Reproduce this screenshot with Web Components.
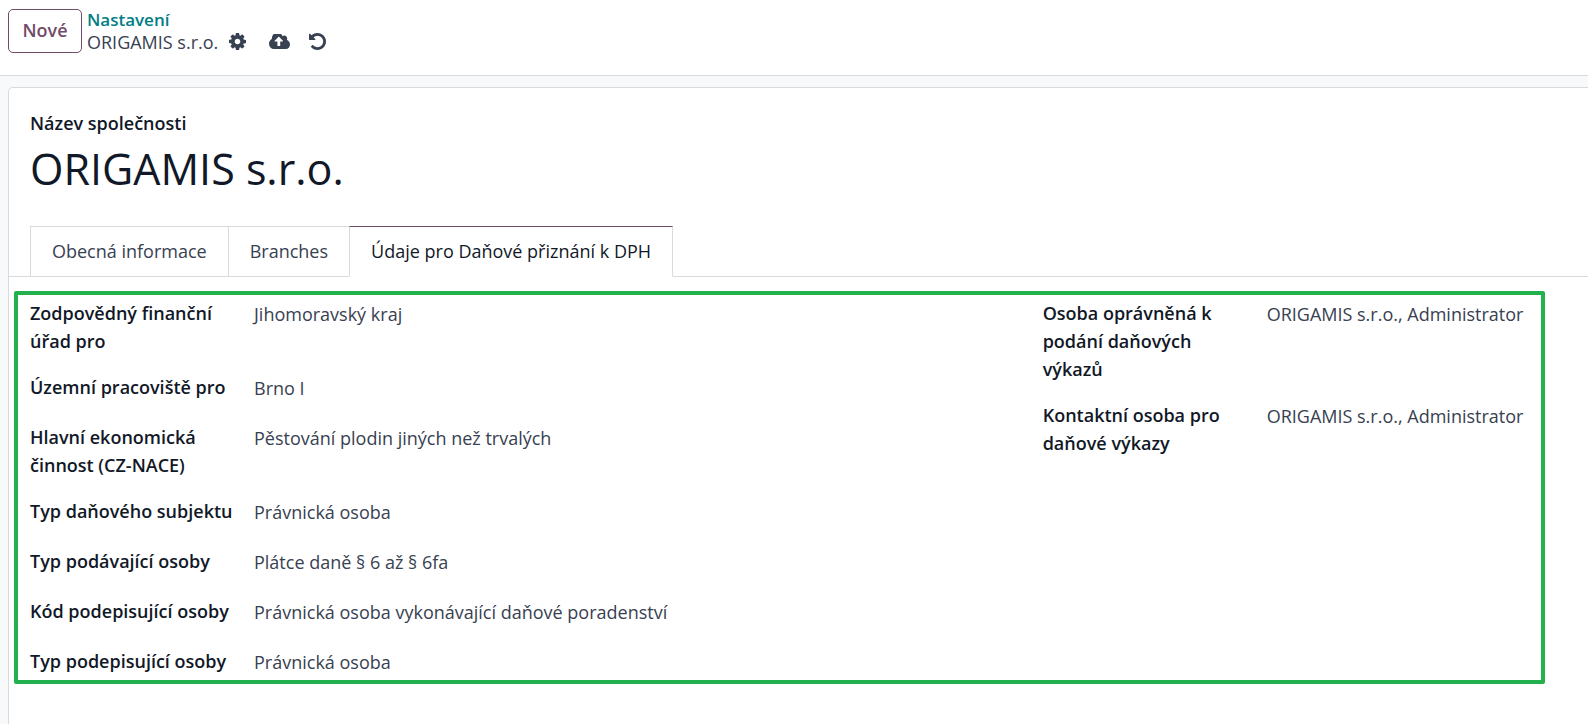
<!DOCTYPE html>
<html lang="cs">
<head>
<meta charset="utf-8">
<title>ORIGAMIS s.r.o.</title>
<style>
  body { margin: 0; background: #f8f9fb; color: #374151; font: 400 18px/28px "Open Sans", "Noto Sans", sans-serif; }
</style>
</head>
<body>
<company-app></company-app>

<template id="t-app">
  <style>
    :host { display: flex; flex-direction: column; min-height: 100vh; }
    company-sheet { flex: 1; margin: 11px 0 0 8px; }
    form-columns { margin: 14px 43px 40px 5px; }
  </style>
  <control-bar></control-bar>
  <company-sheet>
    <span slot="label">Název společnosti</span>
    <span slot="name">ORIGAMIS s.r.o.</span>
    <tab-strip>
      <tab-item>Obecná informace</tab-item>
      <tab-item>Branches</tab-item>
      <tab-item active>Údaje pro Daňové přiznání k DPH</tab-item>
    </tab-strip>
    <form-columns>
      <form-group>
        <form-field label="Zodpovědný finanční úřad pro">Jihomoravský kraj</form-field>
        <form-field label="Územní pracoviště pro">Brno I</form-field>
        <form-field label="Hlavní ekonomická činnost (CZ-NACE)">Pěstování plodin jiných než trvalých</form-field>
        <form-field label="Typ daňového subjektu">Právnická osoba</form-field>
        <form-field label="Typ podávající osoby">Plátce daně § 6 až § 6fa</form-field>
        <form-field label="Kód podepisující osoby">Právnická osoba vykonávající daňové poradenství</form-field>
        <form-field label="Typ podepisující osoby">Právnická osoba</form-field>
      </form-group>
      <form-group>
        <form-field label="Osoba oprávněná k podání daňových výkazů">ORIGAMIS s.r.o., Administrator</form-field>
        <form-field label="Kontaktní osoba pro daňové výkazy">ORIGAMIS s.r.o., Administrator</form-field>
      </form-group>
    </form-columns>
  </company-sheet>
</template>

<template id="t-bar">
  <style>
    :host { display: flex; align-items: flex-start; gap: 5px; padding: 8px 8px 21px; background: #fff; border-bottom: 1px solid #d8dadd; }
    button { font: inherit; color: inherit; background: none; border: 0; padding: 0; cursor: pointer; }
    .new { min-width: 74px; height: 44px; margin-top: 1px; padding: 0 13px 2px; border: 1px solid #714b67; border-radius: 5px; color: #714b67; font-weight: 600; }
    nav { line-height: 23px; }
    a { display: block; width: max-content; color: #017e84; font-size: 17px; font-weight: 600; text-decoration: none; }
    .current { display: flex; align-items: center; }
    .icon { display: flex; margin: 0 0 2px 19px; }
    .gear { margin-left: 11px; margin-right: 4px; }
    svg { display: block; fill: #374151; }
  </style>
  <button class="new" type="button">Nové</button>
  <nav aria-label="Navigace">
    <a href="#settings">Nastavení</a>
    <div class="current">
      <span>ORIGAMIS s.r.o.</span>
      <button class="icon gear" type="button" aria-label="Akce"><svg width="17" height="17" viewBox="128 128 1536 1536"><path d="M1152 896q0-106-75-181t-181-75-181 75-75 181 75 181 181 75 181-75 75-181zm512-109v222q0 12-8 23t-20 13l-185 28q-19 54-39 91 35 50 107 138 10 12 10 25t-9 23q-27 37-99 108t-94 71q-12 0-26-9l-138-108q-44 23-91 38-16 136-29 186-7 28-36 28h-222q-14 0-24.5-8.5t-11.5-21.5l-28-184q-49-16-90-37l-141 107q-10 9-25 9-14 0-25-11-126-114-165-168-7-10-7-23 0-12 8-23 15-21 51-66.5t54-70.5q-27-50-41-99l-183-27q-13-2-21-12.5t-8-23.5v-222q0-12 8-23t19-13l186-28q14-46 39-92-40-57-107-138-10-12-10-24 0-10 9-23 26-36 98.5-107.5t94.5-71.5q13 0 26 10l138 107q44-23 91-38 16-136 29-186 7-28 36-28h222q14 0 24.5 8.5t11.5 21.5l28 184q49 16 90 37l142-107q9-9 24-9 13 0 25 10 129 119 165 170 7 8 7 22 0 12-8 23-15 21-51 66.5t-54 70.5q26 50 41 98l183 28q13 2 21 12.5t8 23.5z"/></svg></button>
      <button class="icon" type="button" aria-label="Uložit"><svg width="21" height="15" viewBox="0 256 1920 1280" preserveAspectRatio="none"><path d="M1280 864q0-14-9-23l-352-352q-9-9-23-9t-23 9l-351 351q-10 12-10 24 0 14 9 23t23 9h224v352q0 13 9.500 22.500t22.500 9.500h192q13 0 22.500-9.500t9.500-22.500v-352h224q13 0 22.500-9.500t9.500-22.500zm640 288q0 159-112.500 271.500t-271.500 112.500h-1088q-185 0-316.500-131.500t-131.500-316.500q0-130 70-240t188-165q-2-30-2-43 0-212 150-362t362-150q156 0 285.500 87t188.500 231q71-62 166-62 106 0 181 75t75 181q0 76-41 138 130 31 213.500 135.500t83.500 238.500z"/></svg></button>
      <button class="icon" type="button" aria-label="Zahodit"><svg width="17" height="17" viewBox="128 128 1536 1536"><path d="M1664 896q0 156-61 298t-164 245-245 164-298 61q-172 0-327-72.500t-264-204.500q-7-10-6.500-22.500t8.500-20.500l137-138q10-9 25-9 16 2 23 12 73 95 179 147t225 52q104 0 198.500-40.500t163.500-109.500 109.500-163.500 40.500-198.500-40.500-198.500-109.500-163.500-163.500-109.500-198.500-40.500q-98 0-188 35.500t-160 101.500l137 138q31 30 14 69-17 40-59 40h-448q-26 0-45-19t-19-45v-448q0-42 40-59 39-17 69 14l130 129q107-101 244.500-156.500t284.500-55.500q156 0 298 61t245 164 164 245 61 298z"/></svg></button>
    </div>
  </nav>
</template>

<template id="t-sheet">
  <style>
    :host { display: block; background: #fff; border: 1px solid #d8dadd; border-width: 1px 0 0 1px; border-radius: 5px 0 0 0; }
    header { padding: 21px 21px 25px; color: #111827; }
    .label { font-weight: 600; }
    h1 { margin: 0; font-size: 43px; font-weight: 400; line-height: 64px; }
  </style>
  <header>
    <div class="label"><slot name="label"></slot></div>
    <h1><slot name="name"></slot></h1>
  </header>
  <slot></slot>
</template>

<template id="t-tabs">
  <style>
    :host { display: flex; padding-left: 21px; border-bottom: 1px solid #d8dadd; }
  </style>
  <slot></slot>
</template>

<template id="t-tab">
  <style>
    :host { display: block; margin: 0 -1px -1px 0; }
    button { display: block; font: inherit; color: #374151; background: #fff; padding: 10px 21px 11px; border: 1px solid #d8dadd; border-radius: 0; cursor: pointer; white-space: nowrap; }
    :host([active]) { z-index: 1; }
    :host([active]) button { color: #111827; border-top-color: #714b67; border-bottom-color: #fff; }
  </style>
  <button type="button" role="tab"><slot></slot></button>
</template>

<template id="t-columns">
  <style>
    :host { display: grid; grid-template-columns: 2fr 1fr; column-gap: 40px; align-items: start; padding: 4px 12px 1px; border: 4px solid #22b14c; border-radius: 2px; }
  </style>
  <slot></slot>
</template>

<template id="t-group">
  <style>
    :host { display: flex; flex-direction: column; gap: 18px; }
  </style>
  <slot></slot>
</template>

<template id="t-field">
  <style>
    :host { display: grid; grid-template-columns: 204px 1fr; column-gap: 20px; min-height: 32px; }
    label { color: #111827; font-weight: 600; }
    output { display: block; padding-top: 1px; }
  </style>
  <label for="value"></label>
  <output id="value"><slot></slot></output>
</template>

<script>
  const define = (name, templateId, setup) =>
    customElements.define(name, class extends HTMLElement {
      constructor() {
        super();
        this.attachShadow({ mode: 'open' })
          .append(document.getElementById(templateId).content.cloneNode(true));
      }
      connectedCallback() { if (setup) setup(this, this.shadowRoot); }
    });

  define('form-field', 't-field', (host, root) => {
    root.querySelector('label').textContent = host.getAttribute('label');
  });
  define('form-group', 't-group');
  define('form-columns', 't-columns');
  define('tab-item', 't-tab', (host, root) => {
    root.querySelector('button').setAttribute('aria-selected', host.hasAttribute('active'));
  });
  define('tab-strip', 't-tabs', host => host.setAttribute('role', 'tablist'));
  define('company-sheet', 't-sheet');
  define('control-bar', 't-bar');
  define('company-app', 't-app');
</script>
</body>
</html>
